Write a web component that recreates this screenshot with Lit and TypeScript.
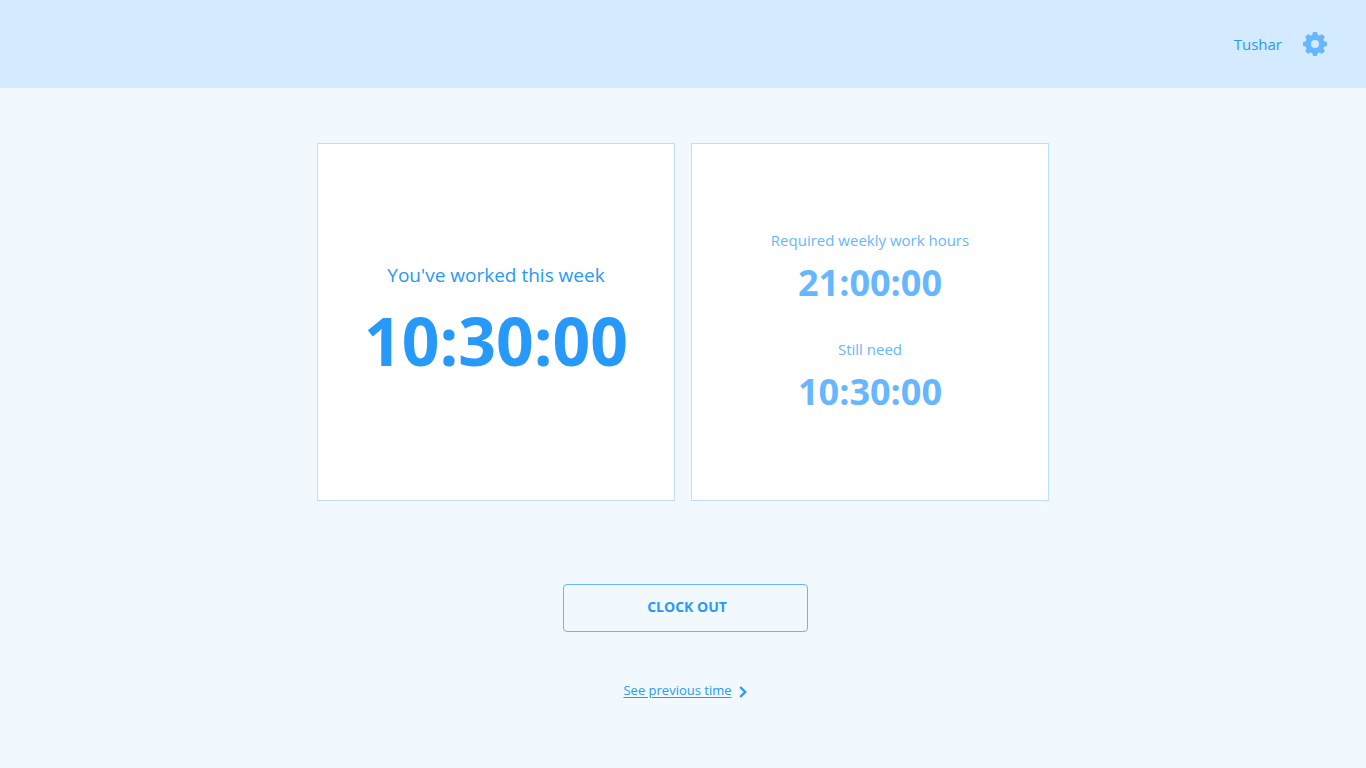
import { LitElement, html, css, svg } from "lit";
import { customElement, property, state } from "lit/decorators.js";

@customElement("time-figure")
class TimeFigure extends LitElement {
  @property() label = "";
  @property() value = "";
  @property({ type: Boolean, reflect: true }) large = false;

  static styles = css`
    :host {
      display: block;
      text-align: center;
      color: #66b7ff;
    }
    .label {
      margin: 0;
      font-size: 15px;
      line-height: 24px;
    }
    .value {
      margin: 6px 0 0;
      font-size: 36px;
      line-height: 49px;
      font-weight: 700;
    }
    :host([large]) {
      color: #2699fb;
    }
    :host([large]) .label {
      font-size: 19px;
      line-height: 32px;
    }
    :host([large]) .value {
      margin-top: 4px;
      font-size: 66px;
      line-height: 90px;
    }
  `;

  render() {
    return html`
      <p class="label">${this.label}</p>
      <p class="value">${this.value}</p>
    `;
  }
}

@customElement("app-root")
class AppRoot extends LitElement {
  @state() private clockedIn = true;

  static styles = css`
    :host {
      display: block;
      min-height: 100vh;
      background: #f1f9ff;
      color: #2699fb;
      font-family: "Segoe UI", "Open Sans", "Noto Sans", sans-serif;
    }
    * {
      box-sizing: border-box;
    }
    .header {
      display: flex;
      align-items: center;
      justify-content: flex-end;
      gap: 20px;
      height: 88px;
      padding: 0 38px;
      background: #d4eaff;
      font-size: 15px;
    }
    .settings {
      display: flex;
      padding: 0;
      border: 0;
      background: none;
      color: #66b7ff;
      cursor: pointer;
    }
    .main {
      display: flex;
      flex-direction: column;
      align-items: center;
      padding: 55px 24px 48px;
    }
    .cards {
      display: grid;
      grid-template-columns: 1fr 1fr;
      gap: 16px;
      width: 100%;
      max-width: 732px;
    }
    .card {
      display: flex;
      flex-direction: column;
      align-items: center;
      justify-content: center;
      gap: 30px;
      aspect-ratio: 1;
      border: 1px solid #bce0fd;
      background: #fff;
    }
    .actions {
      display: flex;
      flex-direction: column;
      align-items: center;
      gap: 48px;
      padding: 83px 0 0 4px;
    }
    .clock {
      width: 245px;
      height: 48px;
      padding: 0 0 3px 4px;
      border: 1px solid #66b7ff;
      border-radius: 4px;
      background: transparent;
      color: inherit;
      font: 700 14px "Segoe UI", "Open Sans", "Noto Sans", sans-serif;
      cursor: pointer;
    }
    .previous {
      display: flex;
      align-items: center;
      gap: 7px;
      color: inherit;
      font-size: 13px;
      line-height: 20px;
      text-decoration: none;
    }
    .previous-text {
      text-decoration: underline;
      text-underline-offset: 2px;
    }
    .chevron {
      margin-top: 4px;
    }
  `;

  private toggleClock() {
    this.clockedIn = !this.clockedIn;
  }

  render() {
    return html`
      <header class="header">
        <span>Tushar</span>
        <button class="settings" aria-label="Settings">
          <svg width="26" height="26" viewBox="-13 -13 26 26" fill="currentColor">
            <circle r="6.7" fill="none" stroke="currentColor" stroke-width="5.4" />
            ${[0, 45, 90, 135, 180, 225, 270, 315].map(
              (angle) => svg`<path
                transform="rotate(${angle})"
                d="M-3.8-7.8Q-2.5-8.8-2.3-11Q-2.2-12-1.2-12H1.2Q2.2-12 2.3-11Q2.5-8.8 3.8-7.8Z"
              />`
            )}
          </svg>
        </button>
      </header>
      <main class="main">
        <div class="cards">
          <section class="card">
            <time-figure large label="You've worked this week" value="10:30:00"></time-figure>
          </section>
          <section class="card">
            <time-figure label="Required weekly work hours" value="21:00:00"></time-figure>
            <time-figure label="Still need" value="10:30:00"></time-figure>
          </section>
        </div>
        <div class="actions">
          <button class="clock" @click=${this.toggleClock}>
            ${this.clockedIn ? "CLOCK OUT" : "CLOCK IN"}
          </button>
          <a class="previous" href="#previous">
            <span class="previous-text">See previous time</span>
            <svg class="chevron" width="8" height="12" viewBox="0 0 8 12" fill="none" stroke="currentColor" stroke-width="2.4" aria-hidden="true">
              <path d="M1.2 1L6.2 6L1.2 11" />
            </svg>
          </a>
        </div>
      </main>
    `;
  }
}
